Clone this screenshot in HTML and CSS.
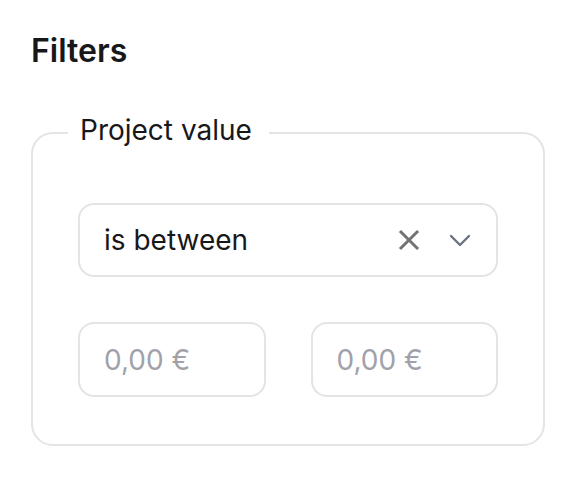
FILE: index.html
```html
<!DOCTYPE html>
<html lang="en">
<head>
<meta charset="utf-8">
<link rel="stylesheet" href="styles.css">
</head>
<body>
<main class="panel">
  <h2 class="title">Filters</h2>
  <fieldset class="group">
    <legend class="group-label">Project value</legend>
    <div class="select">
      <span class="select-value">is between</span>
      <span class="select-icons">
        <svg class="icon-clear" width="22" height="22" viewBox="0 0 22 22" aria-hidden="true">
          <path d="M3 3 L19 19 M19 3 L3 19" stroke="#737373" stroke-width="3" stroke-linecap="square" fill="none"/>
        </svg>
        <svg class="icon-chevron" width="22" height="13" viewBox="0 0 22 13" aria-hidden="true">
          <path d="M2 2 L11 11 L20 2" stroke="#6b7280" stroke-width="2.4" stroke-linecap="round" stroke-linejoin="round" fill="none"/>
        </svg>
      </span>
    </div>
    <div class="range">
      <input class="field" type="text" placeholder="0,00 €">
      <input class="field" type="text" placeholder="0,00 €">
    </div>
  </fieldset>
</main>
</body>
</html>
```

FILE: styles.css
```css
* { box-sizing: border-box; }
html, body { margin: 0; background: #ffffff; }
body {
  font-family: Inter, "Noto Sans", sans-serif;
  color: #18181b;
}
.panel {
  padding: 31px 0 0 31px;
  width: 578px;
}
.title {
  margin: 0;
  font-size: 32px;
  line-height: 40px;
  font-weight: 600;
}
.group {
  margin: 42px 0 0 0;
  width: 514px;
  border: 2px solid #e4e4e7;
  border-radius: 22px;
  padding: 51px 45px 47px 45px;
  min-width: 0;
}
.group-label {
  font-size: 28px;
  line-height: 34px;
  font-weight: 400;
  padding: 0 17px 5px 12px;
  margin-left: -10px;
}
.select {
  height: 74px;
  border: 2px solid #e4e4e7;
  border-radius: 16px;
  display: flex;
  align-items: center;
  justify-content: space-between;
  padding: 0 25px 0 24px;
}
.select-value {
  font-size: 28px;
  line-height: 34px;
}
.select-icons {
  display: flex;
  align-items: center;
  gap: 29px;
}
.icon-clear, .icon-chevron { display: block; }
.range {
  display: flex;
  gap: 45px;
  margin-top: 45px;
}
.field {
  flex: 1;
  min-width: 0;
  height: 75px;
  border: 2px solid #e4e4e7;
  border-radius: 16px;
  padding: 0 24px;
  font-family: Inter, "Noto Sans", sans-serif;
  font-size: 28px;
  color: #18181b;
  background: #fff;
  outline: none;
}
.field::placeholder { color: #a1a1aa; }
```
